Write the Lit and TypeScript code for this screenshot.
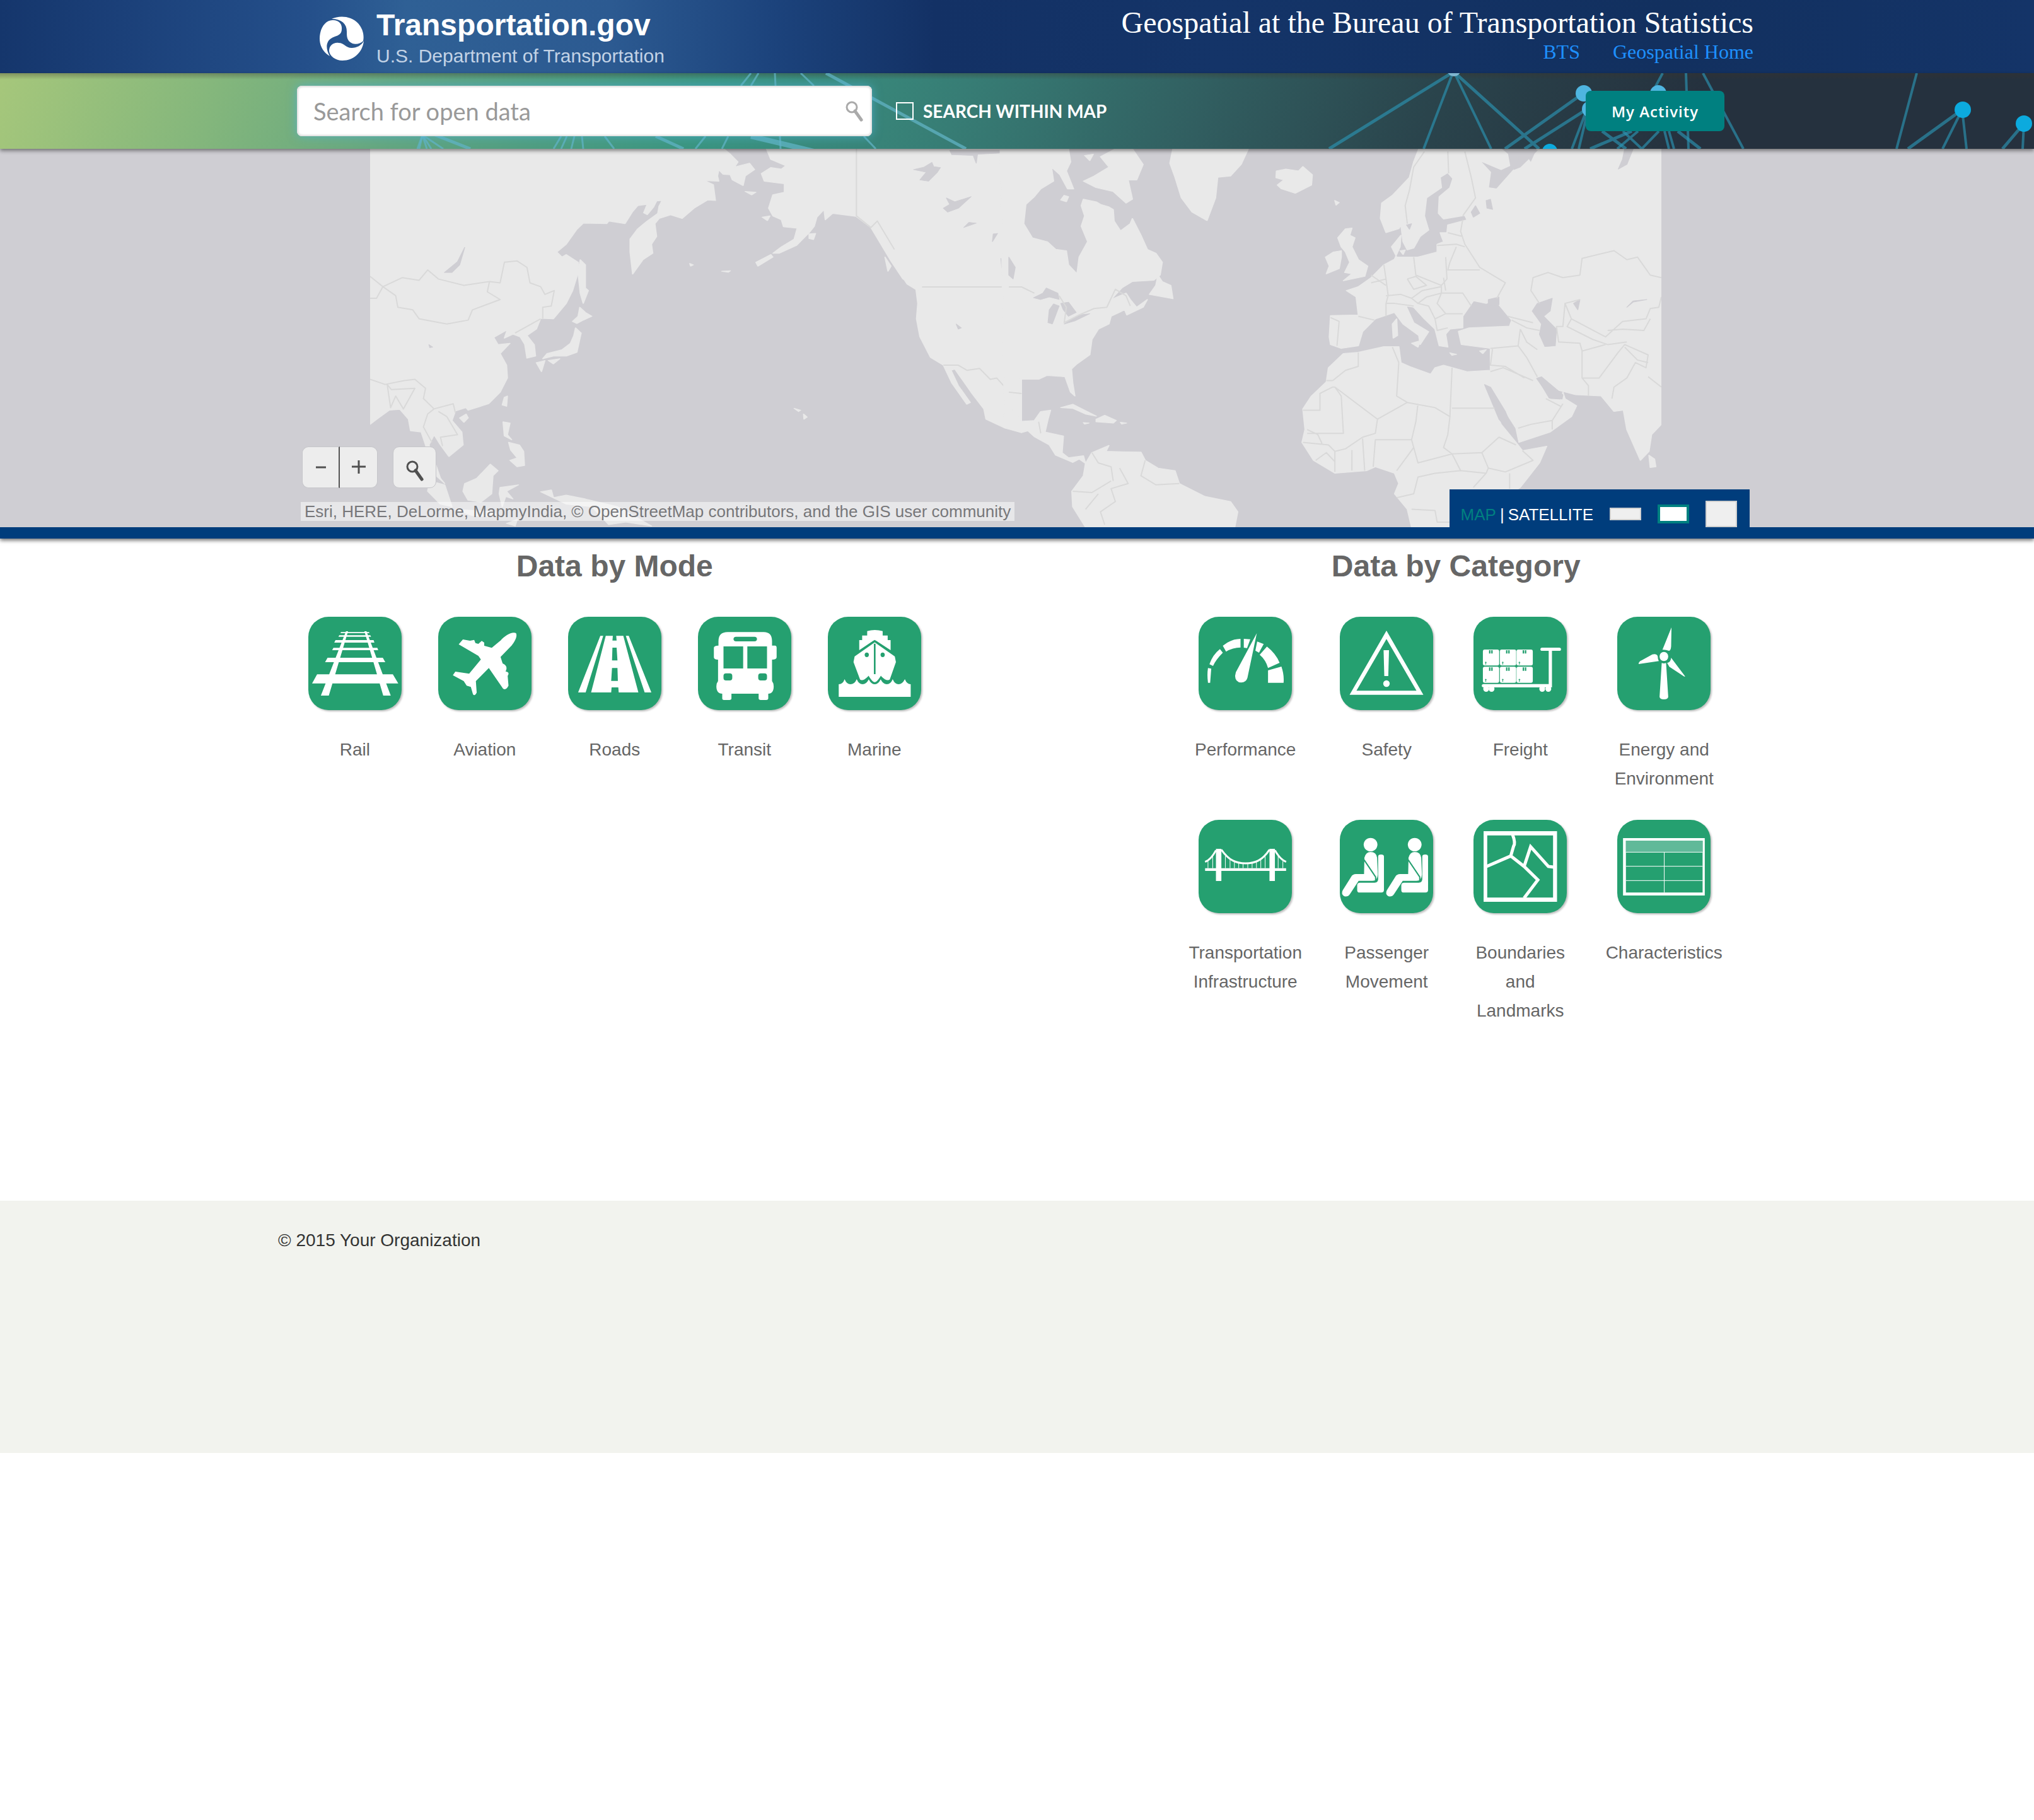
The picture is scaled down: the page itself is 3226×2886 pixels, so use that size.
import { LitElement, html, svg, css, nothing } from "lit";
import type { SVGTemplateResult } from "lit";
import { customElement, property } from "lit/decorators.js";

interface Topic {
  label: string;
  box: string;
  art: SVGTemplateResult;
}

const GREEN = "#25a070";

const rail = svg`
  <path d="M134 453h5L93 759H74zM178 453h5L241 759H223z
    M122 457h67l1 5h-69zM118 472h74l2 7h-78zM109 495h91l2 12h-96zM104 532h105l2 11H101zM90 579h132l6 21H84zM65 658h181l13 43H53z"/>`;

const plane = svg`
  <path d="M540 462C530 453 513 475 503 497L482 532 464 522V507L458 499 450 513 443 509 440 494 430 498 413 492 403 515 450 570 456 587 428 655 395 645 389 662 415 690 422 712 432 718 437 752Q441 764 446 745L444 690 475 628 509 726Q516 736 522 712L520 665Q526 648 515 644 522 618 508 606L503 575 530 520C540 492 543 475 540 462z"/>`;

const road = svg`
  <path d="M742 475h7L707 744H689zM803 475h7L864 744H848zM755 475h17l-1 22h10l-1-22H797L833 744H786l-1-24H769l-1 24H720z"/>
  <path fill=${GREEN} d="M771 531h10l2 61H770zM770 628h13l1 61H768z"/>`;

const bus = svg`
  <path d="M1024 500Q1024 457 1046 457H1132Q1152 457 1152 500V521H1159Q1163 521 1163 532V577Q1163 588 1152 588V690Q1156 700 1156 715 1156 750 1143 750V772Q1143 780 1138 780H1125Q1120 780 1120 772V750H1055V772Q1055 780 1050 780H1037Q1033 780 1033 772V750Q1019 750 1019 715 1019 700 1023 690V588Q1013 588 1013 577V532Q1013 521 1024 521z"/>
  <g fill=${GREEN}>
    <rect x="1036" y="525" width="47" height="105"/>
    <rect x="1093" y="525" width="47" height="105"/>
    <rect x="1060" y="479" width="56" height="22" rx="6" ry="11"/>
    <rect x="1036" y="653" width="21" height="34" rx="6" ry="12"/>
    <rect x="1119" y="653" width="21" height="34" rx="6" ry="12"/>
  </g>`;

const ship = svg`
  <path d="M1383 452Q1401 442 1420 452V473H1432V495H1439V543L1406 500Q1401 493 1396 500L1364 543V495H1371V473H1383z"/>
  <path d="M1315 705Q1325 705 1329 681 1334 705 1343 705 1353 705 1358 681 1363 705 1372 705 1381 705 1387 681 1392 705 1401 705 1410 705 1415 681 1421 705 1430 705 1439 705 1444 681 1449 705 1458 705 1467 705 1473 681 1478 705 1487 705V765H1315z"/>
  <path stroke=${GREEN} stroke-width="3" vector-effect="non-scaling-stroke" d="M1401 500L1451 570 1454 600 1439 685Q1430 700 1416 672 1407 700 1401 700 1395 700 1386 672 1372 700 1364 685L1348 600 1351 570z"/>
  <g fill=${GREEN}><path d="M1399 512h4V657h-4z"/><ellipse cx="1382" cy="565" rx="5" ry="11"/><ellipse cx="1420" cy="565" rx="5" ry="11"/></g>`;

const gauge = svg`
  <path d="M232 462L206 675Q202 697 189 697 172 695 172 665L174 648z
    M97 628l9 3-3 67H97Q94 660 97 628zM101 610Q110 565 130 538L138 555Q118 590 111 618zM138 522Q160 490 187 489V530Q165 530 147 550zM196 489l18 2-9 42-9-2zM233 502l18 12-13 41-10-10zM260 526Q285 560 295 603L263 628Q257 590 240 565zM263 639L300 621Q308 660 306 698H263z"/>`;

const warning = svg`
  <path fill-rule="evenodd" d="M591 450L693 755H489zM591 490L508 736H674z"/>
  <path d="M583 543h15l-2 123H585z"/><ellipse cx="591" cy="702" rx="9" ry="16"/>`;

const carton = (x: number, y: number) => svg`
  <rect x=${x} y=${y} width="45" height="76" rx="5" ry="9"/>
  <path fill=${GREEN} d="M${x + 17} ${y + 3}h4v16h-4zM${x + 23} ${y + 3}h4v16h-4zM${x + 5} ${y + 62}l3-5 3 5h-2v9h-2v-9z"/>`;

const cart = svg`
  ${[540, 622].map((y) => [857, 904, 950].map((x) => carton(x, y)))}
  <path d="M859 704H1039V546H1021Q1016 546 1016 539 1016 531 1021 531H1068Q1073 531 1073 539 1073 546 1068 546H1048V720H859Q854 720 854 712 854 704 859 704z"/>
  ${[866, 881, 1021, 1038].map((x) => svg`<ellipse cx=${x} cy="727" rx="8" ry="14"/>`)}`;

const turbine = svg`
  <ellipse cx="1357" cy="573" rx="12" ry="22"/>
  <path d="M1351 604Q1357 608 1363 604L1369 765Q1368 777 1357 777 1346 777 1345 765z
    M1378 434L1377 525Q1376 546 1371 546 1362 540 1353 541L1358 520z
    M1287 609Q1287 598 1295 592L1325 563Q1338 558 1340 573 1340 588 1343 595z
    M1377 579L1416 668H1413L1372 622 1366 604Q1376 600 1377 579z"/>`;

const bridge = svg`
  <path d="M119 228h15V320H267V228h15V320H313v13H282v48H267V333H134v48H119V333H89V320H119z"/>
  <g fill="none" stroke="#fff" stroke-width="3">
    <path vector-effect="non-scaling-stroke" d="M134 232C155 284 175 297 201 297S247 284 267 232M119 235Q105 280 89 290M282 235Q297 280 313 290"/>
    <path stroke-width="1" vector-effect="non-scaling-stroke" d="M97 286v34M110 262v58M145 262v58M158 280v40M170 290v30M182 296v24M194 298v22M207 298v22M219 296v24M231 290v30M243 280v40M255 262v58M291 262v58M304 286v34"/>
  </g>`;

const rider = (dx: number) => svg`<g transform="translate(${dx} 0)">
  <ellipse cx="547" cy="208" rx="19" ry="32"/>
  <path d="M530 270Q534 243 547 243 563 243 565 270L567 350Q566 380 552 380H514L490 443Q483 460 473 452 465 442 470 425L493 362Q497 348 507 348H529z"/>
  <path d="M568 265Q568 255 576 255 584 255 584 265V424Q584 436 577 436H517Q510 436 510 425V402Q510 389 518 389H558Q568 389 568 372z"/>
  <path fill="none" stroke=${GREEN} stroke-width="2" vector-effect="non-scaling-stroke" d="M529 280L561 362V378"/>
</g>`;

const riders = svg`${[0, 122].map(rider)}`;

const boundaries = svg`
  <path fill-rule="evenodd" d="M859 144H1062V480H859zM869 164V460H1051V164z"/>
  <path fill="none" stroke="#fff" stroke-width="5" vector-effect="non-scaling-stroke" d="M939 160Q948 200 942 215L934 262 867 312M934 262L971 312 1009 376 971 462M971 312L989 218 1038 312 1053 315"/>`;

const table = svg`
  <path fill-rule="evenodd" d="M1244 177H1470V450H1244zM1252 189V436H1464V189z"/>
  <path fill="#60b999" d="M1252 189h212v54h-212z"/>
  <path fill="none" stroke="#fff" stroke-width="1" vector-effect="non-scaling-stroke" d="M1252 244h212M1252 311h212M1252 379h212M1358 244v192"/>`;

const MODES: Topic[] = [
  { label: "Rail", box: "44 384 223 444", art: rail },
  { label: "Aviation", box: "354 384 223 444", art: plane },
  { label: "Roads", box: "665 384 223 444", art: road },
  { label: "Transit", box: "975 384 223 444", art: bus },
  { label: "Marine", box: "1289 384 223 444", art: ship },
];

const CATEGORIES: Topic[] = [
  { label: "Performance", box: "71 384 258 444", art: gauge },
  { label: "Safety", box: "462 384 258 444", art: warning },
  { label: "Freight", box: "831 384 258 444", art: cart },
  { label: "Energy and Environment", box: "1228 384 258 444", art: turbine },
  { label: "Transportation Infrastructure", box: "71 90 258 444", art: bridge },
  { label: "Passenger Movement", box: "462 90 258 444", art: riders },
  { label: "Boundaries and Landmarks", box: "831 90 258 444", art: boundaries },
  { label: "Characteristics", box: "1228 90 258 444", art: table },
];

const magnifier = svg`<circle cx="10" cy="10" r="8" fill="none" stroke="currentColor" stroke-width="3"/><path d="M15 16L25 30" stroke="currentColor" stroke-width="5" stroke-linecap="round"/>`;

@customElement("topic-tile")
class TopicTile extends LitElement {
  @property({ attribute: false }) topic?: Topic;

  static styles = css`
    :host { display: block; }
    .link { display: flex; flex-direction: column; align-items: center; gap: 40px; color: #666; text-decoration: none; }
    .icon { width: 148px; height: 148px; border-radius: 32px; background: #25a070; box-shadow: 2px 2px 3px rgba(0, 0, 0, 0.26); fill: #fff; }
    .label { margin: 0 -6px; font-size: 28px; line-height: 46px; text-align: center; }
  `;

  render() {
    if (!this.topic) return nothing;
    return html`<a class="link" href="#">
      <svg class="icon" viewBox=${this.topic.box} preserveAspectRatio="none" aria-hidden="true">${this.topic.art}</svg>
      <span class="label">${this.topic.label}</span>
    </a>`;
  }
}

@customElement("world-map")
class WorldMap extends LitElement {
  static styles = css`
    :host { display: block; }
    .map { display: block; width: 100%; height: 100%; }
    .land { fill: #e9e9e9; stroke: #e9e9e9; stroke-width: 3; stroke-linejoin: round; }
    .sea { fill: #cfced3; stroke: #cfced3; stroke-width: 2; stroke-linejoin: round; }
    .line { fill: none; stroke: #d9d9d9; stroke-width: 2; stroke-linejoin: round; }
    .line path { vector-effect: non-scaling-stroke; }
  `;

  render() {
    return html`<svg class="map" viewBox="0 0 2048 600" preserveAspectRatio="xMidYMid slice" aria-hidden="true">
      <g transform="translate(-27 -16) scale(.676 .408)">
        <g class="land">
          <path d="M40 39H870L885 60 903 90 895 110 930 95 942 120 920 145 915 182 890 160 885 140 868 138 858 120 855 145 858 165 825 163 845 178 850 240 832 238 800 270 772 310 745 296 718 310 708 330 712 380 700 410 703 445 680 470 656 526 650 440 650 390 668 350 690 320 715 290 718 262 725 240 712 242 705 265 690 295 682 288 690 255 668 260 655 285 638 330 600 320 595 330 540 328 525 352 500 410 478 440 490 460 500 450 528 480 528 520 515 590 500 640 470 700 440 698 430 740 408 765 425 800 428 845 408 853 403 800 392 770 375 760 355 775 362 742 330 772 340 800 368 795 345 835 360 880 362 930 345 985 318 1030 270 1055 265 1045 240 1058 232 1095 255 1140 258 1190 225 1235 205 1190 190 1150 178 1190 205 1320 215 1340 195 1310 170 1190 160 1140 135 1135 130 1090 110 1052 85 1055 60 1085 40 1110z"/>
          <path d="M970 39L980 80 1015 105 1005 118 980 112 958 135 965 165 1012 175 1012 208 985 218 975 270 985 300 1005 315 1010 342 1042 348 1035 390 1005 420 985 445 1000 445 1040 415 1070 365 1082 340 1088 305 1105 275 1108 315 1125 290 1180 302 1215 345 1235 400 1262 475 1290 545 1320 575 1325 640 1322 700 1330 770 1355 850 1385 880 1405 950 1440 1032 1448 1025 1420 960 1403 900 1412 895 1450 985 1480 1050 1485 1090 1530 1125 1568 1142V39z"/>
          <path d="M533 470L545 490 545 580 552 590 540 640 533 600 528 520zM532 655L545 675 560 690 540 705 525 718 515 710 528 690zM522 735L535 755 525 830 500 845 470 845 445 855 455 835 490 820 510 795 518 765zM430 870L450 862 442 905zM458 862L485 855 470 875z"/>
          <path d="M355 1005L362 1000 360 1040 350 1035zM250 1085L265 1070 270 1085 260 1102zM352 1100L368 1105 362 1150 372 1170 355 1155zM365 1180L390 1190 400 1215 402 1270 385 1275 368 1250 385 1240 370 1210zM262 1340L290 1320 322 1265 340 1290 328 1310 325 1380 300 1412 270 1405 258 1370zM180 1330L215 1345 232 1430 205 1420 175 1370zM345 1355L388 1345 360 1370 375 1400 358 1390 350 1430 343 1380zM440 1372L465 1365 470 1395 500 1385 545 1400 620 1430 700 1505 640 1490 600 1500 560 1430 500 1420zM240 1440L330 1450 340 1470 280 1465zM360 1495L385 1480 380 1505z"/>
          <path d="M1070 370L1085 368 1080 392 1070 388zM1248 460L1262 495 1255 515zM1290 540L1332 580 1325 590 1300 565zM945 480L980 450 985 460 950 495zM865 515L885 513 880 519zM920 205L945 208 935 218zM960 305L978 300 972 318zM1057 1070L1065 1082 1058 1090zM790 485L798 490 792 495zM1035 1048L1050 1055 1045 1060z"/>
        </g>
        <g class="sea">
          <path d="M262 422L250 490 232 520 214 520 245 478zM1315 120L1340 110 1358 92 1362 108 1378 112 1370 132 1350 165 1330 160 1345 130zM1385 270L1400 255 1392 230 1412 245 1450 225 1420 270 1395 285zM1433 345L1445 325 1462 328zM1500 400L1502 370 1512 368zM1520 465L1530 490 1545 465 1555 545 1540 550 1522 500zM1400 45H1568V65L1530 55 1465 60 1462 95 1455 65 1405 62zM1415 720L1427 735 1420 740zM178 800L187 810 180 812z"/>
        </g>
        <g class="line">
          <path d="M40 535L70 575 115 540 155 550 175 510 200 545 260 570 320 555 345 560 355 480 385 475 408 500 415 560 440 575 450 605 472 590 465 650 445 655V700M70 575L100 610 105 655 140 665 155 700 220 720 270 705 280 665 345 625 315 595 320 555M70 575L55 620H40M40 935L75 955 120 940 145 935 170 970 165 1010 190 1050 235 1030 240 1065M80 955L90 975 145 970 118 1050 100 1000 88 1045 80 955M190 1050L175 1070 165 1120 185 1180M200 1060L220 1080 245 1150 205 1160 210 1195M380 755L440 700M1181 39V300L1215 345 1230 320 1270 430M1335 576H1568M1385 880L1420 880 1440 900 1470 893 1495 935 1510 930 1540 985"/>
        </g>
      </g>
      <g transform="translate(1013 -16) scale(.676 .408)">
        <g class="land">
          <path d="M-20 39H140L145 90 135 125 152 195 138 195 120 140 100 110 105 165 75 195 60 225 40 255 35 330 55 385 90 400 110 430 135 435 140 490 160 525 165 460 185 400 170 340 178 300 170 260 175 235 205 245 215 255 235 265 245 275 247 320 262 358 285 330 290 310 310 375 325 430 345 445 360 480 355 530 340 550 290 555 265 580 240 625 275 600 285 625 300 655 325 625 315 655 277 685 272 665 240 690 235 720 210 740 195 780 190 840 160 875 147 895 150 950 155 1000 145 985 132 925 90 920 70 935 25 935 8 985 10 1060 30 1098 60 1095 75 1060 98 1055 92 1090 85 1140 128 1155 125 1220 140 1240 175 1232 180 1262 165 1245 150 1258 110 1230 95 1190 60 1158 45 1135 30 1142 -10 1120z"/>
          <path d="M180 1262L195 1220 235 1192 228 1215 310 1218 320 1250 350 1280 390 1290 400 1340 460 1390 520 1410 537 1450 530 1510H180L150 1430 148 1370 175 1310z"/>
          <path d="M250 39H290L315 100 300 160 280 160 290 235 275 250 245 205 205 190 175 165 200 145 235 110 215 70zM130 220L140 225 135 245 122 238zM178 65L198 60 190 85zM350 530L360 555 380 570 385 622 330 605 345 570zM385 39H562L545 100 520 145 490 150 485 230 465 318 430 285 405 230 390 150 378 95zM628 125L650 118 680 125 690 108 712 140 710 180 672 212 640 195 630 180 645 160 627 152z"/>
          <path d="M790 350L805 347 800 375 812 385 805 420 820 470 842 495 835 535 785 552 805 525 788 520 800 480 790 440 780 420 772 385zM762 440L780 435 780 460 775 505 745 525 752 495 743 460zM122 1045L150 1032 205 1078 180 1070 150 1048zM205 1090L225 1075 252 1095 245 1105 205 1100zM175 1103L188 1105 178 1109zM262 1102L276 1105 265 1109zM765 240L775 248 768 258zM900 720L910 700 912 765 902 775zM945 795L965 785 960 810zM1035 832L1050 838 1040 842zM1105 825L1120 820 1112 835zM1502 1230L1515 1245 1518 1275 1505 1278zM918 435L930 432 925 450z"/>
          <path d="M962 39L950 90 940 150 900 220 875 250 872 310 885 365 915 350 920 335 925 400 935 432 950 425 965 380 985 355 975 300 980 230 1015 190 1012 150 1030 132 1042 155 1035 190 1010 225 1008 290 1020 312 1070 298 1075 315 1030 335 1028 365 1012 365 1020 400 1005 410 1005 440 960 460 910 460 898 420 920 375 918 420 905 468 880 490 850 540 820 575 792 590 815 615 820 685 755 687 752 770 755 800 780 815 820 805 830 750 860 700 905 675 925 720 962 765 965 800 985 750 950 715 932 650 950 655 975 700 1000 740 1010 805 1030 810 1025 760 1035 740 1065 735 1065 690 1090 630 1120 640 1150 620 1150 645 1180 705 1175 728 1080 735 1055 748 1062 800 1130 815 1130 900 1075 905 1020 880 1000 890 990 915 940 885 920 870 915 808 880 808 820 830 785 835 750 890 745 945 710 1000 690 1050 695 1130 688 1180 715 1250 765 1300 840 1290 860 1275 905 1300 915 1340 905 1380 935 1440 945 1510H1060L1200 1355 1245 1260 1262 1195 1205 1212 1190 1180 1155 1110 1130 1000 1115 955 1130 965 1165 1060 1190 1125 1197 1180 1270 1140 1320 1080 1332 1038 1305 1010 1300 985 1295 1015 1270 1012 1235 930 1250 925 1290 978 1330 995 1390 1000 1420 1060 1442 1055 1450 1130 1482 1250 1502 1215 1508 1150 1531 1110V39H1240L1225 95 1215 70 1200 110 1185 120 1145 195 1125 190 1130 130 1105 85 1155 120 1175 105 1170 60 1155 39z"/>
        </g>
        <g class="sea">
          <path d="M1240 640L1275 620 1270 670 1255 690 1285 740 1282 805 1258 808 1245 760 1250 720 1228 670zM1125 625L1150 615 1150 645 1125 652zM1085 285L1095 260 1105 290 1090 305zM1120 240L1130 235 1135 275 1122 270zM1445 39H1465L1450 100 1430 118 1440 80zM58 618L80 600 88 580 115 600 118 625 95 615 75 625zM105 642L118 650 102 720 92 715 95 665zM122 640L140 635 158 675 140 690 128 665zM130 720L165 685 190 680 155 708zM0 460L15 500 10 545 0 530zM1325 640L1340 625 1335 665zM1450 655L1465 630 1497 625 1465 635zM1205 39L1185 120 1200 110 1240 45zM933 335L945 330 940 352zM1240 930L1250 925 1300 995 1298 1012 1268 1008zM1116 955L1130 965 1165 1060 1194 1175 1150 1090z"/>
        </g>
        <g class="line">
          <path d="M0 576H30L60 600M118 610L135 655 130 715 165 685 200 660 230 655 250 585 275 610 285 650M75 1145L70 1100M0 985L30 990M195 1220L210 1260 240 1275 245 1330M320 1250L310 1310 345 1345 400 1340M260 1280L280 1340 240 1360 250 1410 215 1450 225 1500M150 1370L195 1375 240 1330M180 1440L210 1380M975 50L950 110 940 200 930 260 935 330M1030 50L1032 135M1070 50L1085 150 1095 230 1065 300M1065 315L1060 360 1070 410 1105 500 1165 560 1145 620M1030 365L1065 380M1005 415L1050 410 1070 420M1050 420L1035 480 1030 510 1105 510M950 460L955 530 1015 570 1028 545 1025 460M880 490L885 545 890 610 885 640M850 530L885 570M885 545L850 560M935 545L955 535 980 570 950 585 935 545M885 610L920 605 945 620 970 590 1015 575 1015 600 980 615 960 640 945 620M885 640L905 640 950 650M885 640V690M820 690L858 705M755 695L775 710 770 805M1015 600L1065 600 1085 650M1015 600L1005 640 1025 680H1065M960 640L985 650 1000 700 1025 680M1000 700L1005 745 1030 735M1020 540L1025 590M1180 705L1215 735 1245 745M1170 690L1230 715M1130 815L1195 805 1200 740M1135 815L1130 880 1165 885 1210 930M1195 805L1215 850 1240 925M1130 905L1160 890 1230 940M1200 740L1215 790 1240 820M1195 1125L1225 1110 1275 1095 1300 1030M1260 1010L1295 1040M1275 1095V1130"/>
          <path d="M1245 640L1225 590 1230 540 1265 520 1300 540 1340 530 1345 465 1420 435 1450 470 1475 460 1505 530 1531 540M1531 615L1525 655 1505 660 1495 700 1440 710 1400 770 1320 700 1305 640 1340 625M1305 640L1300 730 1285 730 1290 790 1340 795 1345 825 1400 800M1320 700L1310 730 1370 780 1405 800 1450 790M1405 745L1440 740 1490 745 1505 700M1345 825L1345 930 1360 960V1000M1345 930H1385L1430 830 1445 800 1500 840 1495 890 1470 870 1450 930 1420 965 1415 1010M1445 810L1475 860 1500 870M1500 925L1531 965M820 830V885L790 900 760 940M760 940H745M765 965H760L730 990V1055H690M765 965L865 1090 935 1025 1000 1045 1035 1080 1040 890M765 965L780 1000 785 1145H700M900 810L915 870 910 1000 935 1025M1040 1047H1140M1035 1080L1030 1150 1020 1200 1040 1225 1110 1220M865 1090L860 1145 830 1160 790 1205M960 1030L955 1100 945 1170 860 1170 855 1275M945 1170L950 1200 910 1290M950 1200L960 1260 1040 1225 1060 1290 1000 1300 960 1315 950 1380 910 1395M690 1180L750 1190 765 1215 790 1205M765 1215V1295M805 1210V1290M830 1165L835 1290M1110 1220L1150 1160 1190 1190M1110 1220L1125 1280 1165 1295 1230 1250 1205 1212M1060 1290L1120 1300 1125 1280M1175 1300V1360M1120 1300L1090 1355M945 1440L1000 1445 1005 1490H1040M700 1130L725 1150 735 1185M720 1250L745 1220 765 1255"/>
        </g>
      </g>
    </svg>`;
  }
}

const DOWN_RAYS = [
  [670, 98, 662], [670, 98, 665], [670, 98, 677], [670, 98, 684], [670, 98, 703],
  [890, 100, 878], [899, 100, 890], [911, 100, 906], [923, 100, 925], [959, 100, 974],
  [1119, 100, 1103], [1155, 100, 1145], [1237, 100, 1238], [1370, 100, 1389],
];

@customElement("app-root")
class AppRoot extends LitElement {
  static styles = css`
    :host { display: block; background: #fff; color: #333; font-family: "Liberation Sans", Arial, sans-serif; font-size: 28px; }
    * { box-sizing: border-box; }
    a { text-decoration: none; }
    button, input { font: inherit; margin: 0; }
    .wrap { max-width: 2344px; margin: 0 auto; }

    .top { background: linear-gradient(90deg, #15366c 0%, #1b4079 6%, #244f8a 15%, #2f6095 20%, #2c5a91 30%, #1c437c 38%, #133165 46%, #143468 60%, #12305f 82%, #143468 100%); }
    .masthead { display: flex; justify-content: space-between; height: 116px; padding: 0 4px 0 66px; }
    .brand { display: flex; align-items: center; gap: 20px; color: #fff; }
    .seal { width: 70px; height: 70px; margin-top: 6px; }
    .names { display: flex; flex-direction: column; padding-top: 6px; }
    .site { font-size: 48px; line-height: 56px; font-weight: 700; }
    .dept { font-size: 30px; line-height: 42px; color: #c3d3e6; }
    .office { display: flex; flex-direction: column; align-items: flex-end; padding-top: 8px; font-family: "Liberation Serif", "Times New Roman", serif; }
    .title { margin: 0; color: #fff; font-size: 48px; line-height: 56px; font-weight: 400; }
    .links { display: flex; gap: 52px; font-size: 32px; line-height: 36px; }
    .links a { color: #1e90ff; }

    .strip { position: relative; z-index: 1; background: linear-gradient(180deg, rgba(60, 50, 40, 0.35), rgba(60, 50, 40, 0) 10px), linear-gradient(110deg, #a6c77b 0%, #83b67c 11%, #5da381 22%, #3a9581 35%, #377d75 47%, #315e60 59%, #2a444c 70%, #25313e 83%, #25313e 100%); box-shadow: 0 3px 6px rgba(0, 0, 0, 0.45); }
    .net { position: absolute; inset: 0; width: 100%; height: 100%; }
    .tools { position: relative; display: flex; align-items: center; height: 120px; padding: 0 50px 0 30px; }
    .search { display: flex; align-items: center; width: 912px; height: 80px; padding: 0 14px 0 26px; border-radius: 8px; background: #fff; box-shadow: 0 0 16px rgba(80, 180, 215, 0.7), inset 0 0 3px 2px #ddd; }
    .field { flex: 1; min-width: 0; border: 0; padding: 0; outline: 0; background: none; font-family: Lato, sans-serif; font-size: 38px; color: #444; }
    .field::placeholder { color: #999; opacity: 1; }
    .go { display: flex; padding: 0; border: 0; background: none; color: #aaa; }
    .glass { width: 28px; height: 33px; }
    .within { display: flex; align-items: center; gap: 15px; margin-left: 38px; color: #fff; font-family: Lato, sans-serif; font-weight: 700; font-size: 28px; }
    .tick { appearance: none; width: 28px; height: 28px; border: 2px solid #fff; background: none; }
    .activity { margin-left: auto; width: 220px; height: 64px; border: 0; border-radius: 8px; background: #008080; color: #fff; font-family: "Open Sans", sans-serif; font-size: 24px; font-weight: 600; letter-spacing: 1px; }

    .stage { position: relative; background: #cfced3; border-bottom: 18px solid #003d7c; box-shadow: 0 3px 6px rgba(0, 0, 0, 0.55); }
    .world { position: absolute; top: 0; bottom: 0; left: 0; right: 4px; max-width: 2048px; margin: 0 auto; }
    .overlay { position: relative; display: flex; justify-content: space-between; align-items: flex-end; min-height: 600px; padding: 0 10px 0 36px; }
    .left { display: flex; flex-direction: column; align-items: flex-start; gap: 22px; padding-bottom: 10px; }
    .controls { display: flex; gap: 24px; padding-left: 2px; }
    .zoom { display: flex; }
    .ctl { display: flex; align-items: center; justify-content: center; width: 60px; height: 66px; padding: 0; border: 1px solid #c6c6ca; border-radius: 10px; background: #ededed; color: #505050; }
    .ctl.out { border-radius: 10px 0 0 10px; border-right: 2px solid #555; }
    .ctl.in { border-radius: 0 10px 10px 0; border-left: 0; }
    .ctl.find { width: 69px; }
    .sign { width: 22px; height: 22px; }
    .find .glass { margin-top: 10px; }
    .credit { padding: 0 6px; background: rgba(255, 255, 255, 0.5); color: #77777a; font-size: 26px; line-height: 30px; }
    .panel { display: flex; align-items: center; gap: 26px; height: 60px; padding: 0 20px 0 18px; background: #003d7c; }
    .base { display: flex; align-items: center; gap: 6px; padding-top: 20px; color: #fff; font-size: 26px; line-height: 40px; }
    .base button { padding: 0; border: 0; background: none; color: #fff; line-height: 40px; }
    .base .on { color: #008080; }
    .sizes { display: flex; align-items: center; align-self: flex-end; gap: 26px; height: 42px; }
    .size { width: 50px; padding: 0; border: 2px solid #d0d0d0; background: #efefef; }
    .small { height: 20px; }
    .medium { height: 30px; border: 4px solid #008080; background: #fff; }
    .large { height: 42px; }

    .content { display: grid; grid-template-columns: 46fr 14fr 41fr; min-height: 1050px; padding-top: 16px; }
    .group { display: flex; flex-direction: column; align-items: center; gap: 52px; }
    .group.second { grid-column: 3; }
    .heading { margin: 0; font-size: 48px; line-height: 56px; font-weight: 700; color: #666; }
    .modes { display: flex; gap: 58px; }
    .cats { display: grid; grid-template-columns: 176px 152px 152px 184px; gap: 42px 60px; }

    .foot { min-height: 400px; padding-top: 40px; background: #f2f3ee; line-height: 46px; }
  `;

  render() {
    return html`
      <header class="top">
        <div class="wrap masthead">
          <a class="brand" href="#">
            <svg class="seal" viewBox="0 0 70 70" aria-hidden="true">
              <path fill="#fff" d="M19 4C31-2 50-1 61 11 68 19 71 29 69 39 65 43 58 45 52 43 43 39 43 32 43 24 43 12 35 4 19 4z"/>
              <path fill="#fff" d="M16 63C5 57 0 46 0 35 0 19 9 6 20 6 29 5 36 11 35 20 35 31 26 30 18 35 9 41 10 53 16 63z"/>
              <path fill="#fff" d="M70 39C68 57 54 70 36 70 25 70 16 63 15 55 15 46 22 41 30 42 39 42 41 50 51 50 59 50 66 46 70 39z"/>
            </svg>
            <span class="names">
              <span class="site">Transportation.gov</span>
              <span class="dept">U.S. Department of Transportation</span>
            </span>
          </a>
          <div class="office">
            <h1 class="title">Geospatial at the Bureau of Transportation Statistics</h1>
            <nav class="links"><a href="#">BTS</a><a href="#">Geospatial Home</a></nav>
          </div>
        </div>
      </header>

      <div class="strip">
        <svg class="net" viewBox="0 0 3226 120" preserveAspectRatio="xMidYMid slice" aria-hidden="true">
          <g fill="none" stroke="#62b3c4" stroke-opacity=".75" stroke-width="3">
            ${DOWN_RAYS.map(([x1, y1, x2]) => svg`<path d="M${x1} ${y1}L${x2} 120"/>`)}
            <path d="M1191 0L1175 20M1203 0L1191 20M1229 0L1230 20M1270 0L1291 20"/>
            <path stroke-width="5" d="M1310 0L1532 120M690 98L746 120M1040 100L1084 120"/>
            <path stroke-width="8" d="M1191 100L1291 124"/>
          </g>
          <g fill="none" stroke="#2b93b2" stroke-opacity=".65" stroke-width="4">
            <path stroke-width="5" d="M2302 0L2108 120M2308 0L2441 120M2511 32L2387 120M2517 57L2418 120M3112 58L3026 120M2541 92L2579 120M2588 92L2522 120M3210 80L3176 120M2661 92L2697 120"/>
            <path d="M2304 0L2258 120M2307 0L2365 120M2637 0L2621 30M2674 0L2678 120M2701 0L2765 120M3040 0L3008 120M3112 58L3081 120M3112 58L3119 120M3210 80L3208 120M2517 57L2493 120M2519 57L2504 120M2598 92L2565 120M2574 92L2604 120M2631 92L2604 120M2640 92L2647 120M2647 92L2655 120"/>
          </g>
          <g fill="#4fb5e0"><circle cx="2512" cy="32" r="13"/><circle cx="2630" cy="32" r="13"/><circle cx="2522" cy="57" r="13"/><circle cx="2306" cy="-6" r="11" fill="#7fb6cf"/></g>
          <g fill="#0caade"><circle cx="2458" cy="124" r="12"/><circle cx="3113" cy="58" r="13"/><circle cx="3210" cy="80" r="13"/></g>
        </svg>
        <form class="wrap tools">
          <div class="search">
            <input class="field" type="text" placeholder="Search for open data" aria-label="Search for open data" />
            <button class="go" type="button" aria-label="Search"><svg class="glass" viewBox="0 0 28 33">${magnifier}</svg></button>
          </div>
          <label class="within"><input class="tick" type="checkbox" />SEARCH WITHIN MAP</label>
          <button class="activity" type="button">My Activity</button>
        </form>
      </div>

      <section class="stage">
        <world-map class="world"></world-map>
        <div class="wrap overlay">
          <div class="left">
            <div class="controls">
              <div class="zoom">
                <button class="ctl out" type="button" aria-label="Zoom out"><svg class="sign" viewBox="0 0 22 22"><path d="M3 11H19" stroke="currentColor" stroke-width="3"/></svg></button>
                <button class="ctl in" type="button" aria-label="Zoom in"><svg class="sign" viewBox="0 0 22 22"><path d="M0 10H22M11 0V21" stroke="currentColor" stroke-width="3"/></svg></button>
              </div>
              <button class="ctl find" type="button" aria-label="Find a place"><svg class="glass" viewBox="0 0 28 33">${magnifier}</svg></button>
            </div>
            <div class="credit">Esri, HERE, DeLorme, MapmyIndia, © OpenStreetMap contributors, and the GIS user community</div>
          </div>
          <div class="panel">
            <div class="base"><button class="on" type="button">MAP</button><span>|</span><button type="button">SATELLITE</button></div>
            <div class="sizes">
              <button class="size small" type="button" aria-label="Small map"></button>
              <button class="size medium" type="button" aria-label="Medium map"></button>
              <button class="size large" type="button" aria-label="Large map"></button>
            </div>
          </div>
        </div>
      </section>

      <main class="wrap content">
        <section class="group">
          <h2 class="heading">Data by Mode</h2>
          <div class="modes">${MODES.map((t) => html`<topic-tile .topic=${t}></topic-tile>`)}</div>
        </section>
        <section class="group second">
          <h2 class="heading">Data by Category</h2>
          <div class="cats">${CATEGORIES.map((t) => html`<topic-tile .topic=${t}></topic-tile>`)}</div>
        </section>
      </main>

      <footer class="foot"><div class="wrap">© 2015 Your Organization</div></footer>
    `;
  }
}
